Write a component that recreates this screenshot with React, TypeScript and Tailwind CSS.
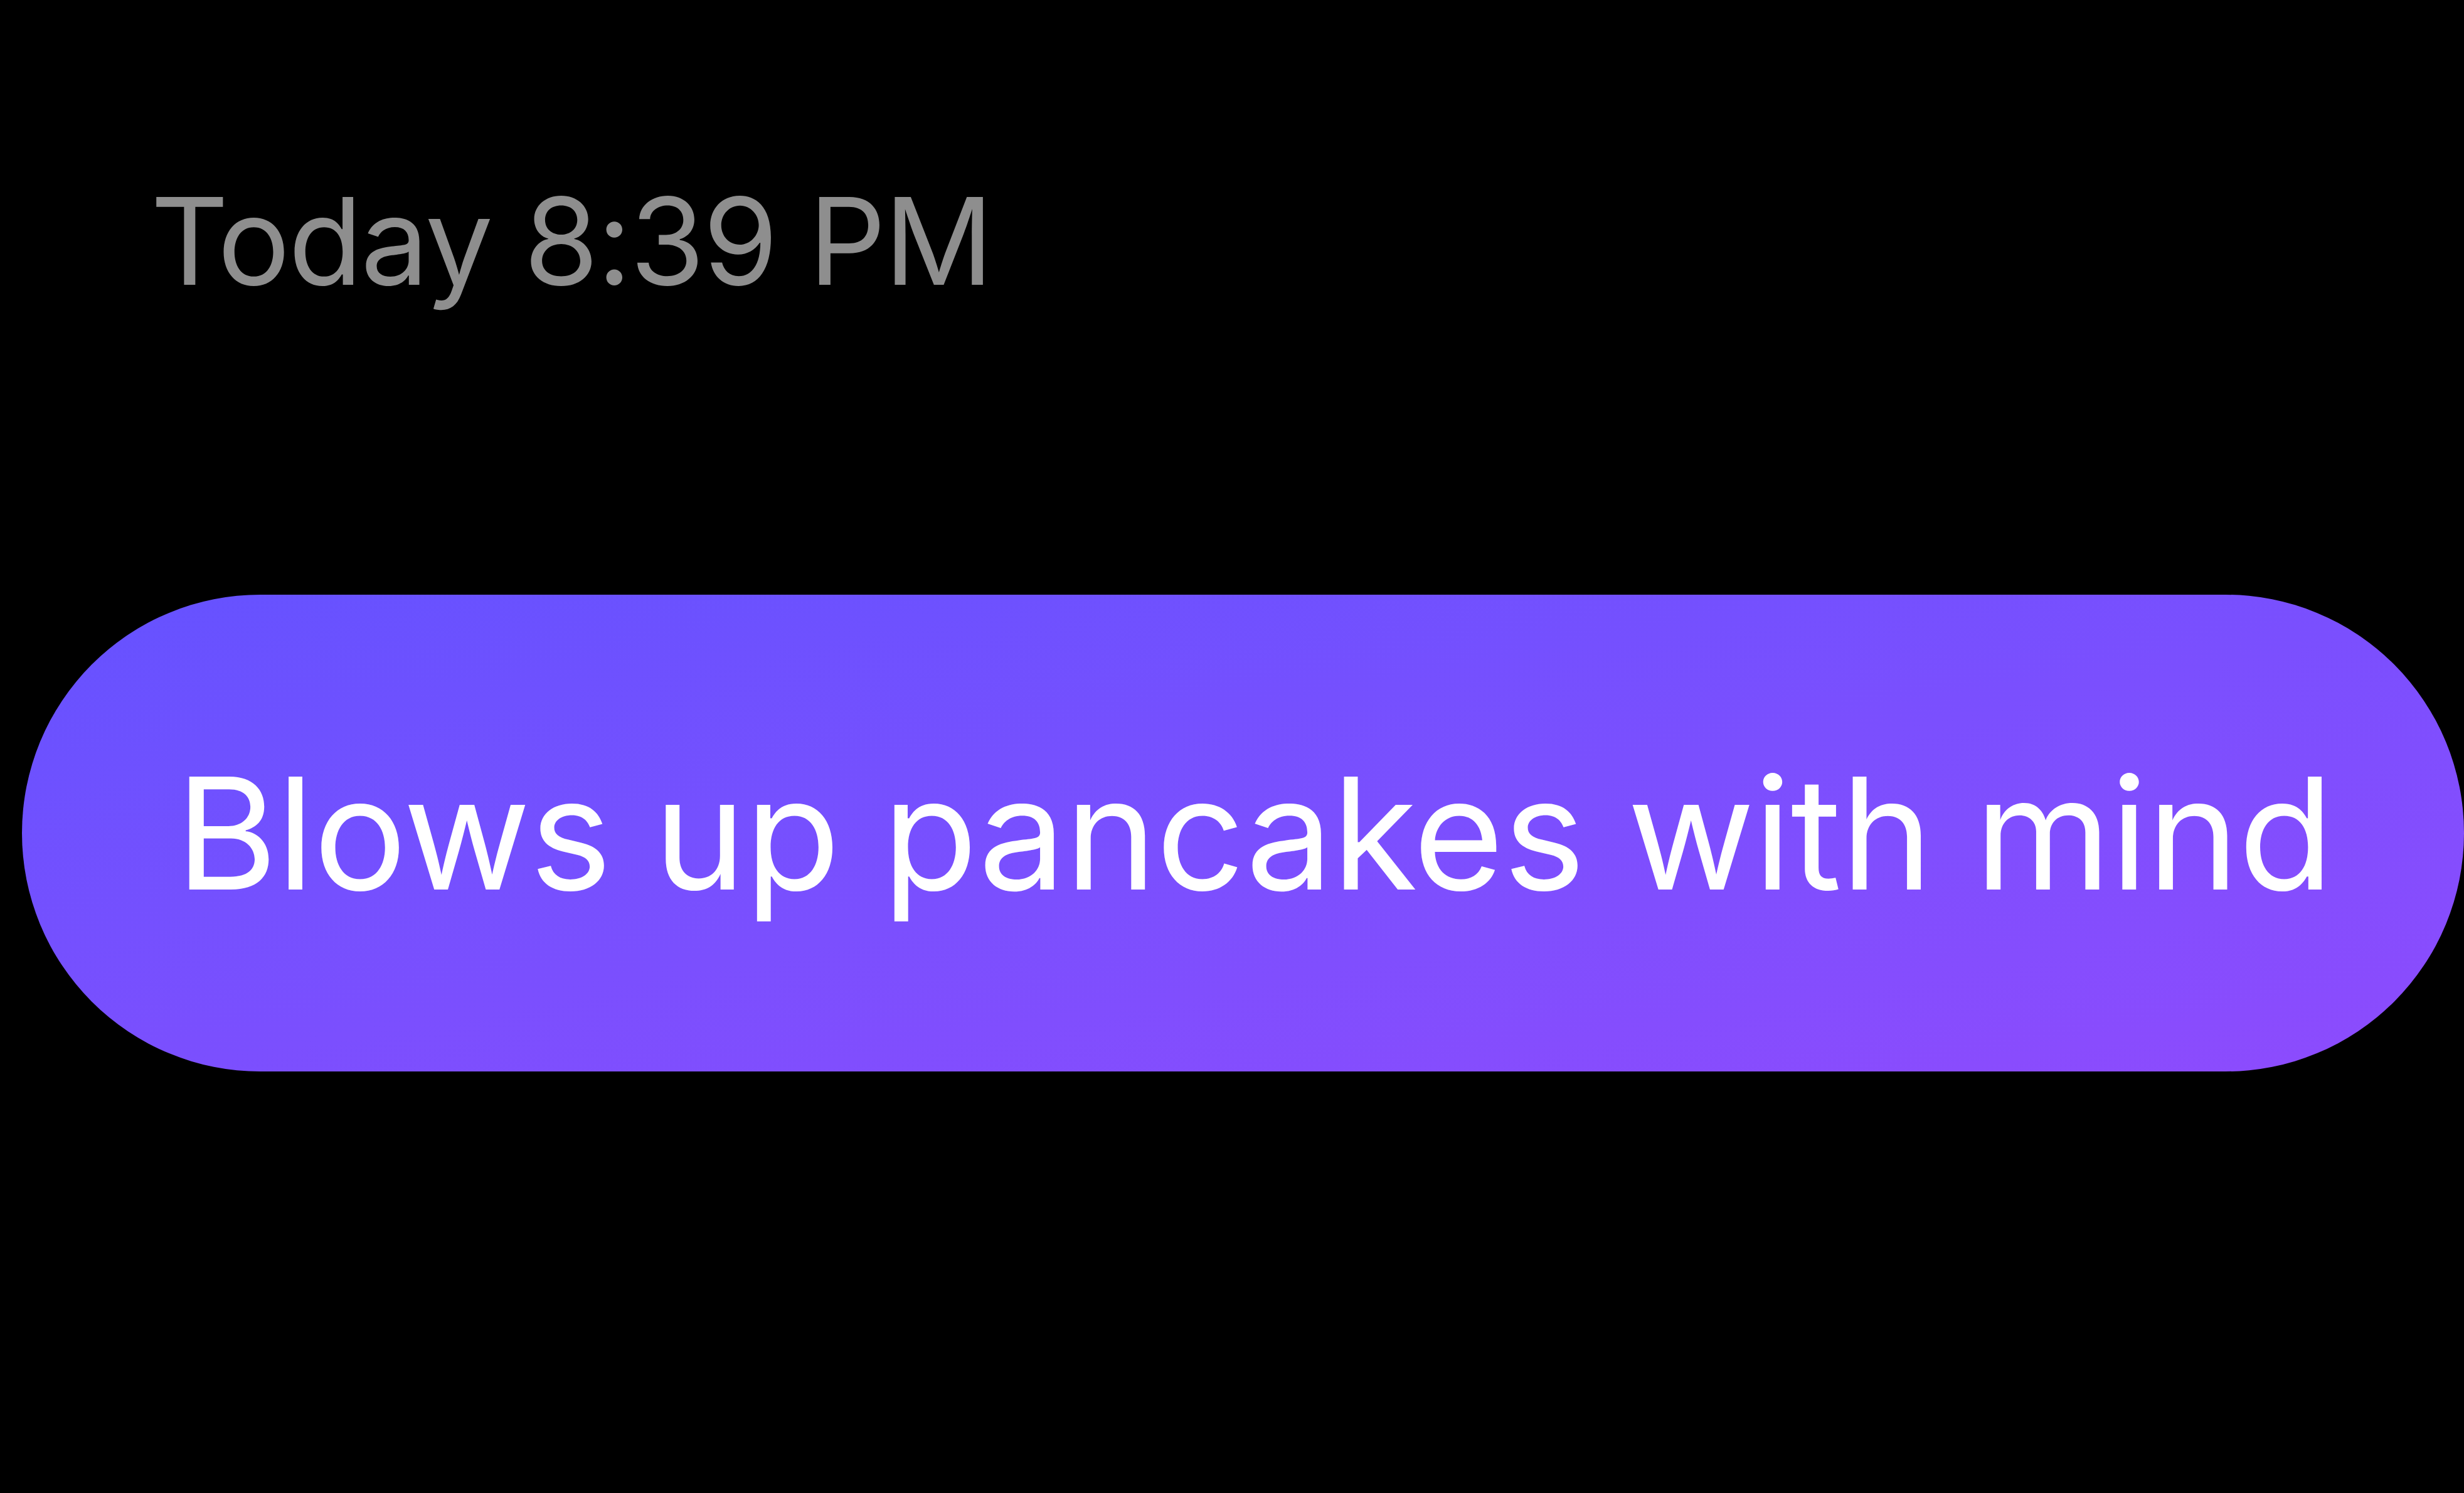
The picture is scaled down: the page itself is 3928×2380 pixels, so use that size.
import React from "react";

const App = () => {
  return (
    <div className="w-[3928px] h-[2380px] bg-black overflow-hidden font-['Inter','Liberation_Sans',sans-serif]">
      {/* Timestamp */}
      <div className="pt-[288px] pl-[240px]">
        <p className="text-[193px] leading-none text-[#8e8e8e] tracking-[-2.8px]">Today 8:39 PM</p>
      </div>

      {/* Message bubble */}
      <div className="mt-[467px] ml-[35px] w-[3893px] h-[760px] rounded-full bg-gradient-to-br from-[#6552ff] to-[#8d4bfd] flex items-center pl-[245px]">
        <p className="text-[248px] leading-none text-white whitespace-nowrap tracking-[-1.3px]">Blows up pancakes with mind</p>
      </div>
    </div>
  );
};

export default App;
